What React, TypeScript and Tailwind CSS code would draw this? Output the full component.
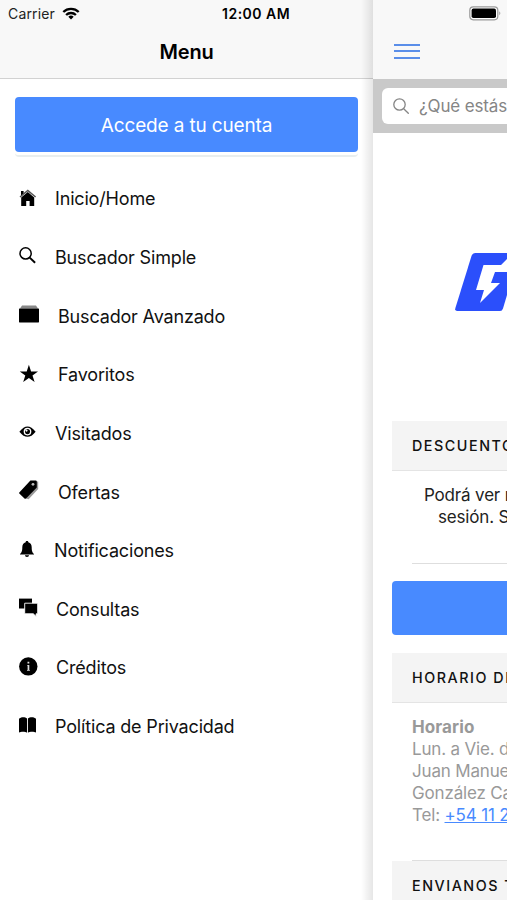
import React from "react";

const Home = () => (
  <>
    <path d="M1 9 8.8 2.4 16.6 9" fill="none" stroke="#555" strokeWidth="1.5" />
    <path d="M2 3h2.6v2.2L2 7.4zM2.2 9.6 8.8 4l6.4 5.6V18h-4.6v-5H7.2v5h-5z" />
  </>
);
const Search = () => (
  <g fill="none" stroke="#000">
    <circle cx="6.6" cy="7.4" r="5.6" strokeWidth="1.5" />
    <path d="m10.7 11.6 5.4 5.2" strokeWidth="2" />
  </g>
);
const Folder = () => (
  <>
    <path d="M3 .6h14l2 3H1z" fill="#888" />
    <rect x="0" y="3.4" width="20" height="14" rx=".6" />
  </>
);
const Star = () => <path d="m9.9.8 2.2 6.6H19l-5.5 4 2.1 6.7-5.7-4.1-5.7 4.1 2.1-6.7-5.5-4h6.9z" />;
const Eye = () => (
  <>
    <path d="M.4 9.7C3.2 6 5.9 4.4 8.5 4.4s5.3 1.6 8.1 5.3c-2.8 3.7-5.5 5-8.1 5s-5.3-1.3-8.1-5z" />
    <circle cx="8.5" cy="9.6" r="3.2" fill="none" stroke="#fff" strokeWidth="1.3" />
    <circle cx="7.5" cy="8.6" r="1.1" fill="#fff" />
  </>
);
const Tag = () => (
  <>
    <path d="M14 .5h5.200v7.500L9.600 18.300 6.800 17.500z" fill="#999" />
    <path d="M.3 11.400 11.400-.6h5.300q1.100 0 1.100 1.100v6.100L7 17.500q-.8.7-1.500 0L.3 12.600q-.5-.6 0-1.200z" />
    <circle cx="14" cy="3.300" r="1.400" fill="#bbb" />
  </>
);
const Bell = () => (
  <path d="M8 1c1 0 1.300.5 1.300 1.200 2.300.6 3.400 2.500 3.400 5 0 4.100.7 5.300 2.300 6.700v.6H1v-.6c1.600-1.400 2.300-2.600 2.300-6.700 0-2.500 1.100-4.400 3.400-5C6.700 1.500 7 1 8 1zM6 15.300h4c0 1-.8 1.700-2 1.700s-2-.7-2-1.700z" />
);
const Chat = () => (
  <>
    <path d="M0 .6h13v9.900H0z" />
    <path d="M5.700 5.200h13v10.600h-1.600v2.700l-2.800-2.700H5.700z" stroke="#fff" strokeWidth=".9" />
  </>
);
const Info = () => (
  <>
    <circle cx="9.3" cy="9.4" r="9.2" />
    <path d="M8.500 4.800h1.800v1.700H8.500zM8 7.900h2.300v5.200h.6v.7H8v-.7h.6V8.600H8z" fill="#ddd" />
  </>
);
const Book = () => (
  <path d="M0 2.800C1.500.8 6.200.6 8 2.600v14.200C6.300 15.400 2 15.400 0 16.600zM8.900 2.600C10.800.6 15.500.8 17 2.800v13.800c-2-1.200-6.300-1.200-8.100.2z" />
);

const items = [
  { label: "Inicio/Home", Icon: Home, gap: "ml-4" },
  { label: "Buscador Simple", Icon: Search, gap: "ml-4" },
  { label: "Buscador Avanzado", Icon: Folder, gap: "ml-[19px]" },
  { label: "Favoritos", Icon: Star, gap: "ml-[19px]" },
  { label: "Visitados", Icon: Eye, gap: "ml-4" },
  { label: "Ofertas", Icon: Tag, gap: "ml-[19px]" },
  { label: "Notificaciones", Icon: Bell, gap: "ml-[15px]" },
  { label: "Consultas", Icon: Chat, gap: "ml-[17px]" },
  { label: "Créditos", Icon: Info, gap: "ml-[17px]" },
  { label: "Política de Privacidad", Icon: Book, gap: "ml-4" },
];

const SectionTitle = ({ children }: { children: React.ReactNode }) => (
  <h2 className="flex h-[50px] items-center border-b border-[#e4e4e4] bg-[#f4f4f4] pt-px pl-5 text-[14.3px] font-medium tracking-[1.55px] text-[#111]">
    {children}
  </h2>
);

export default function App() {
  return (
    <div className="flex h-[900px] w-[507px] overflow-hidden bg-white font-['Inter',sans-serif] whitespace-nowrap">
      <aside className="relative w-[373px] shrink-0">
        <header className="h-[79px] border-b border-[#d2d2d2] bg-[#f8f8f8]">
          <div className="flex h-[27px] items-center pl-2 text-[14px] text-[#222]">
            <span className="w-[54px] tracking-[0.15px]">Carrier</span>
            <svg className="h-[13px] w-[18px]" viewBox="0 0 18 13" fill="none" stroke="#000" strokeWidth="2.3">
              <path d="M1.300 5a11 11 0 0 1 15.400 0M4.100 8a7 7 0 0 1 9.800 0" />
              <path d="m9 12.500-2.700-2.700a3.900 3.900 0 0 1 5.400 0z" fill="#000" stroke="none" />
            </svg>
            <span className="ml-[142px] text-[14px] font-semibold tracking-[0.5px] text-black">12:00 AM</span>
          </div>
          <h1 className="pt-px text-center text-[20px] leading-[48px] font-semibold tracking-[-0.2px] text-black">Menu</h1>
        </header>
        <div className="mx-[15px] mt-[18px] h-[60px] rounded border-b-2 border-[#e9eeee]">
          <button className="block h-[55px] w-full rounded bg-[#488aff] pt-[3px] text-[19px] tracking-[-0.15px] text-white">
            Accede a tu cuenta
          </button>
        </div>
        <nav className="mt-[12.5px] flex flex-col">
          {items.map(({ label, Icon, gap }) => (
            <a key={label} className="flex h-[58.65px] items-center pl-[19px] text-[18px] tracking-[-0.17px] text-[#111]">
              <svg className="-mt-[2px] h-5 w-5 shrink-0 overflow-visible" viewBox="0 0 20 20" fill="#000">
                <Icon />
              </svg>
              <span className={gap}>{label}</span>
            </a>
          ))}
        </nav>
        <div className="absolute inset-y-0 right-0 w-3 bg-gradient-to-r from-transparent to-black/10" />
      </aside>

      <main className="w-[134px] shrink-0 overflow-hidden bg-white">
        <header className="h-[79px] bg-[#f8f8f8]">
          <div className="flex h-[27px] items-center pl-[96px]">
            <svg className="h-[15px] w-[33px]" viewBox="0 0 33 15">
              <rect x=".8" y=".8" width="28" height="13" rx="3.5" fill="#fff" stroke="#999" strokeWidth="1.2" />
              <rect x="2.6" y="2.6" width="24.4" height="9.4" rx="1.8" />
              <path d="M30.300 5.300q2 2 0 4z" fill="#999" />
            </svg>
          </div>
          <div className="mt-[17px] ml-[21px] flex w-[26px] flex-col gap-[4.4px]">
            <i className="h-[2px] bg-[#5a8ee9]" />
            <i className="h-[2px] bg-[#5a8ee9]" />
            <i className="h-[2px] bg-[#5a8ee9]" />
          </div>
        </header>
        <div className="h-[54px] bg-[#c9c9c9] pt-[9px] pl-[9px]">
          <div className="flex h-[36px] w-[240px] items-center rounded-md bg-white pl-[11px] text-[17px] tracking-[-0.15px] text-[#858585]">
            <svg className="h-4 w-4" viewBox="0 0 16 16" fill="none" stroke="#858585" strokeWidth="1.3">
              <circle cx="6.5" cy="6.5" r="5.7" />
              <path d="m10.700 10.700 5 5" />
            </svg>
            <span className="ml-[10px] pt-[2px]">¿Qué estás</span>
          </div>
        </div>
        <div className="flex h-[288px] items-start pt-[120px] pl-[82px]">
          <svg className="h-[58px] w-[52px]" viewBox="0 0 52 58">
            <path d="M20.500 0H52v42l-4 13.500Q47.200 58 45 58H2.200Q-.5 58 .4 55L16.500 3q1-3 4-3z" fill="#2b4ffb" />
            <path d="M28.500 12H46l6-6v13H40l-4 11H45L25 50l4-13h-8z" fill="#fff" />
          </svg>
        </div>
        <section className="pl-[19px]">
          <SectionTitle>DESCUENTO</SectionTitle>
          <div className="ml-5 h-[93px] border-b border-[#dedede] pt-[13px] text-[17px] leading-[22px] tracking-[-0.17px] text-[#222]">
            <p className="pl-3">Podrá ver n</p>
            <p className="pl-[26px]">sesión. S</p>
          </div>
          <div className="mt-[17px] h-[54px] w-[240px] rounded bg-[#488aff]" />
        </section>
        <section className="mt-[18px] pl-[19px]">
          <SectionTitle>HORARIO DE</SectionTitle>
          <div className="ml-5 h-[158px] border-b border-[#dedede] pt-[13px] text-[17px] leading-[22px] tracking-[-0.17px] text-[#999]">
            <p className="font-bold tracking-[0.1px]">Horario</p>
            <p>Lun. a Vie. d</p>
            <p>Juan Manue</p>
            <p>González Ca</p>
            <p>
              Tel: <a className="text-[#488aff] underline">+54 11 2</a>
            </p>
          </div>
          <SectionTitle>ENVIANOS T</SectionTitle>
        </section>
      </main>
    </div>
  );
}
